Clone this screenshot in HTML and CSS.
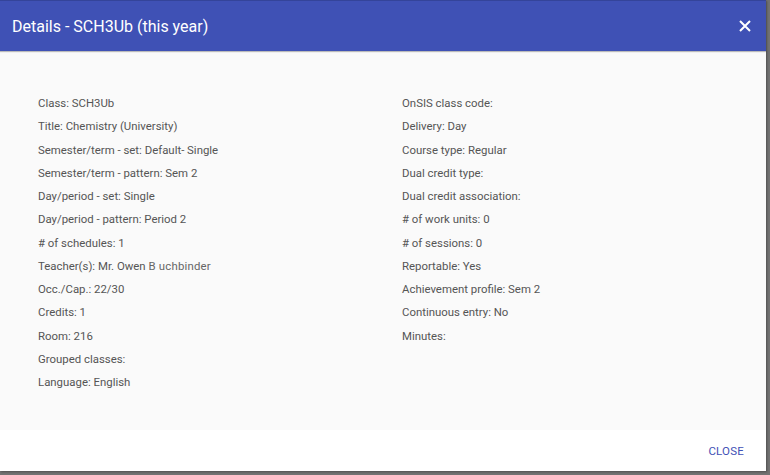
FILE: index.html
```html
<!DOCTYPE html>
<html>
<head>
<meta charset="utf-8">
<link rel="stylesheet" href="styles.css">
</head>
<body>
<div class="dialog">
  <div class="header">
    <div class="title">Details - SCH3Ub (this year)</div>
    <button class="x" aria-label="Close">
      <svg width="12" height="12" viewBox="0 0 12 12"><path d="M1 1L11 11M11 1L1 11" stroke="#fff" stroke-width="2" fill="none"/></svg>
    </button>
  </div>
  <div class="content">
    <div class="col col-left">
      <div class="row">Class: SCH3Ub</div>
      <div class="row">Title: Chemistry (University)</div>
      <div class="row">Semester/term - set: Default- Single</div>
      <div class="row">Semester/term - pattern: Sem 2</div>
      <div class="row">Day/period - set: Single</div>
      <div class="row">Day/period - pattern: Period 2</div>
      <div class="row"># of schedules: 1</div>
      <div class="row">Teacher(s): Mr. Owen <span class="name">B uchbinder</span></div>
      <div class="row">Occ./Cap.: 22/30</div>
      <div class="row">Credits: 1</div>
      <div class="row">Room: 216</div>
      <div class="row">Grouped classes:</div>
      <div class="row">Language: English</div>
    </div>
    <div class="col col-right">
      <div class="row">OnSIS class code:</div>
      <div class="row">Delivery: Day</div>
      <div class="row">Course type: Regular</div>
      <div class="row">Dual credit type:</div>
      <div class="row">Dual credit association:</div>
      <div class="row"># of work units: 0</div>
      <div class="row"># of sessions: 0</div>
      <div class="row">Reportable: Yes</div>
      <div class="row">Achievement profile: Sem 2</div>
      <div class="row">Continuous entry: No</div>
      <div class="row">Minutes:</div>
    </div>
  </div>
  <div class="footer">
    <button class="close-btn">Close</button>
  </div>
</div>
</body>
</html>
```

FILE: styles.css
```css
html, body {
  margin: 0;
  padding: 0;
  width: 770px;
  height: 475px;
  overflow: hidden;
  background: #727272;
  font-family: Roboto, "Liberation Sans", sans-serif;
}
.dialog {
  width: 766px;
  height: 471px;
  display: flex;
  flex-direction: column;
  background: #fff;
  box-shadow: 1px 1px 2px rgba(0,0,0,0.3);
}
.header {
  height: 51px;
  flex: none;
  background: #3f51b5;
  border-top: 1px solid #34449a;
  box-sizing: border-box;
  display: flex;
  align-items: center;
  justify-content: space-between;
  padding: 0 15px 0 12px;
  box-shadow: 0 1px 1px rgba(0,0,0,0.25);
  position: relative;
  z-index: 1;
}
.title {
  color: #fff;
  font-size: 16px;
  line-height: 20px;
  margin-top: 1px;
}
.x {
  border: 0;
  background: none;
  padding: 0;
  width: 12px;
  height: 12px;
  display: flex;
  cursor: pointer;
}
.content {
  flex: 1;
  background: #fafafa;
  display: flex;
  padding: 41px 0 0 38px;
}
.col {
  display: flex;
  flex-direction: column;
}
.col-left {
  width: 364px;
}
.row {
  font-size: 11.4px;
  line-height: 23.25px;
  height: 23.25px;
  color: #555;
  white-space: nowrap;
}
.name {
  color: #666;
  letter-spacing: 0.2px;
}
.footer {
  height: 41px;
  flex: none;
  background: #fff;
  display: flex;
  align-items: center;
  justify-content: flex-end;
  padding-right: 22px;
}
.close-btn {
  border: 0;
  background: none;
  padding: 0;
  color: #3f51b5;
  font-family: Roboto, "Liberation Sans", sans-serif;
  font-size: 11.5px;
  text-transform: uppercase;
  letter-spacing: 0.2px;
  cursor: pointer;
}
```
